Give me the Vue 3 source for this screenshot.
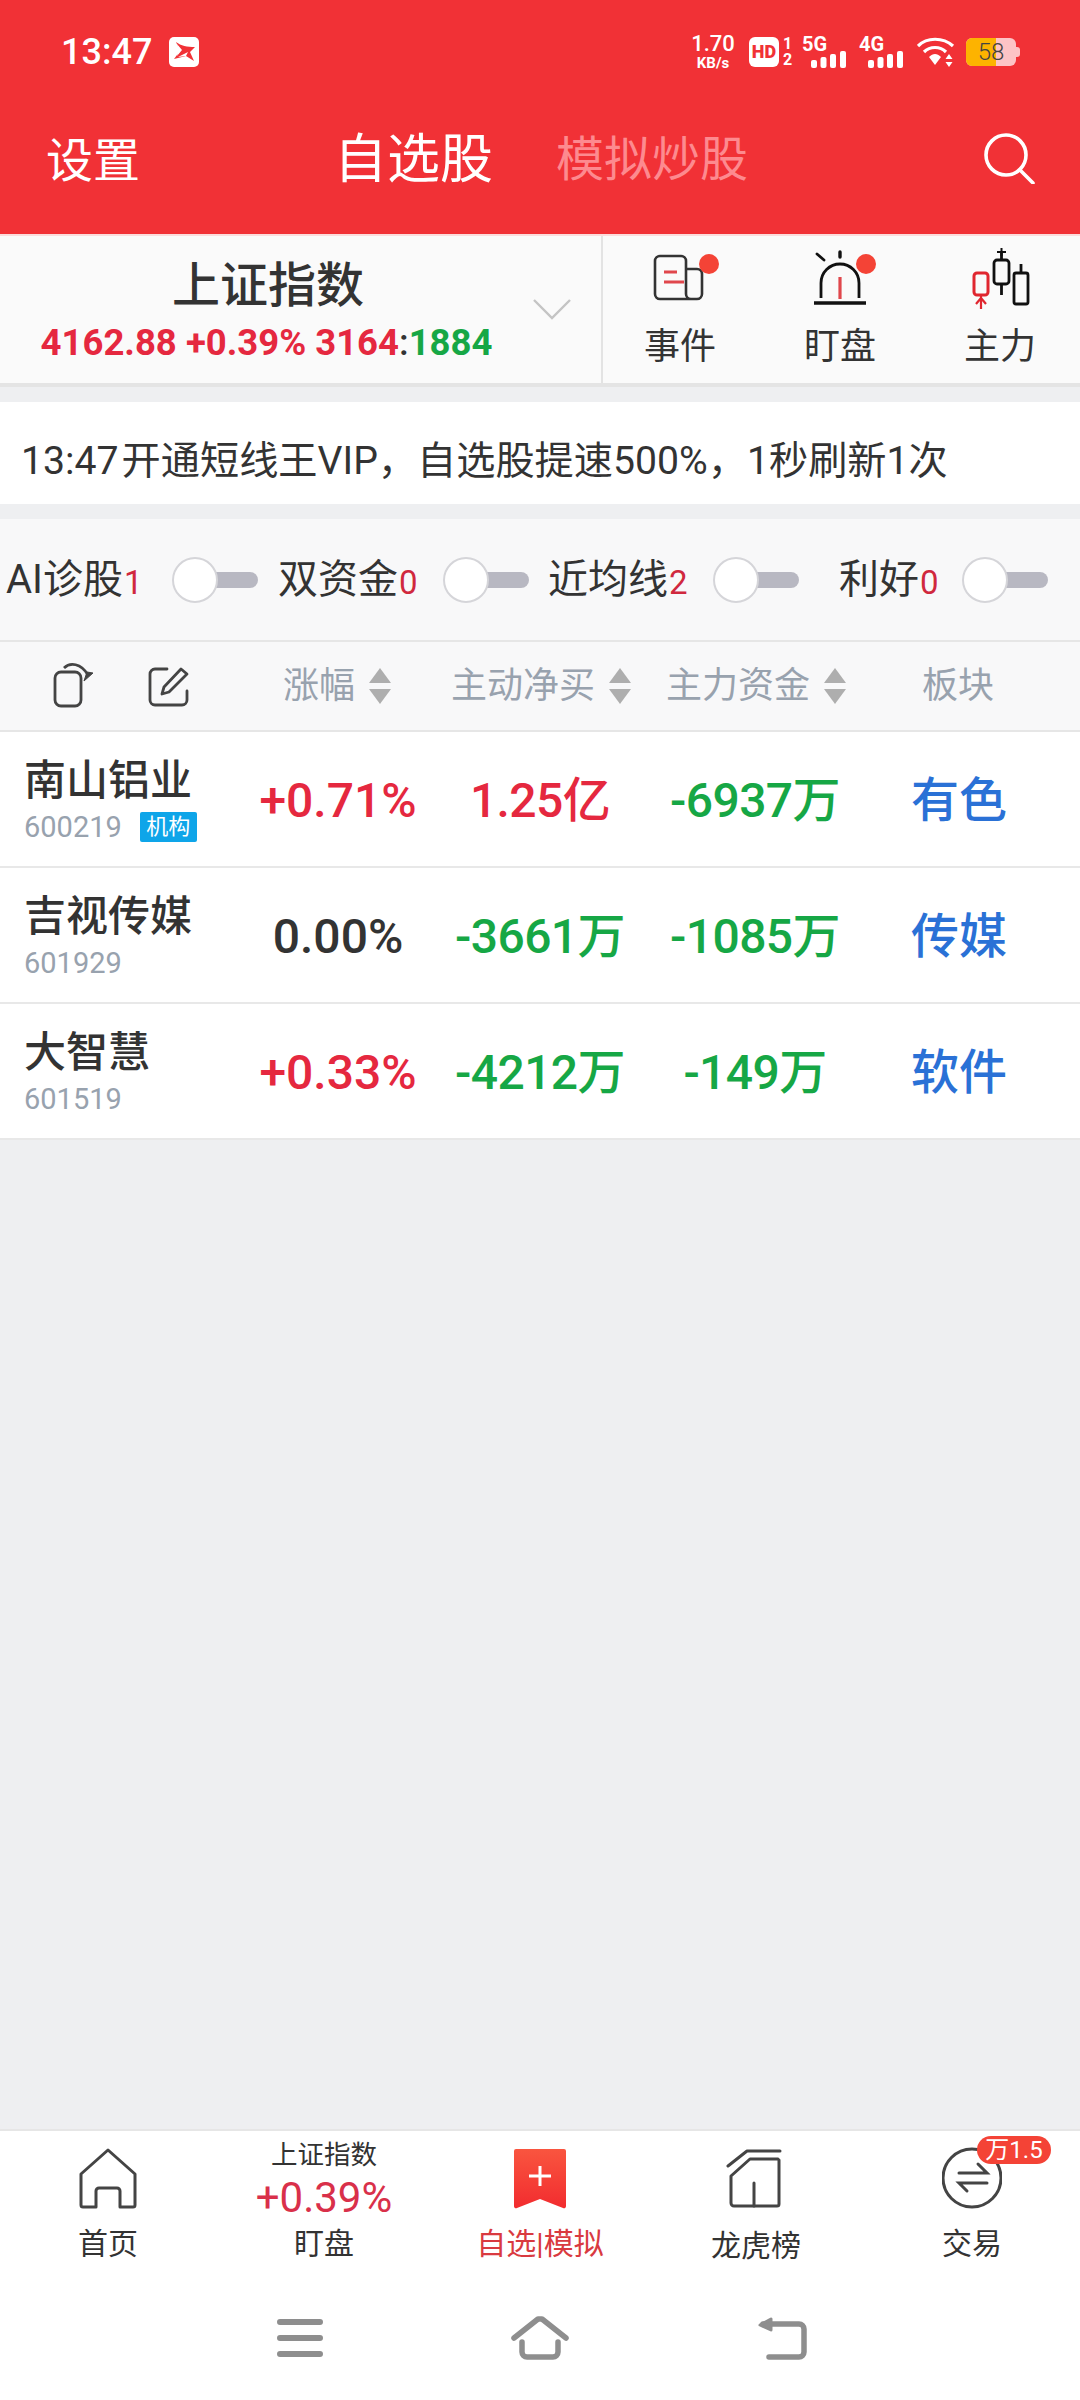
<script setup>
const filters = [
  { label: 'AI诊股', count: '1', cls: 'f1' },
  { label: '双资金', count: '0', cls: 'f2' },
  { label: '近均线', count: '2', cls: 'f3' },
  { label: '利好', count: '0', cls: 'f4' }
]
const stocks = [
  { name: '南山铝业', code: '600219', tag: '机构', pct: '+0.71%', pc: 'red', net: '1.25亿', nc: 'red', main: '-6937万', sector: '有色' },
  { name: '吉视传媒', code: '601929', pct: '0.00%', pc: 'dark', net: '-3661万', nc: 'green', main: '-1085万', sector: '传媒' },
  { name: '大智慧', code: '601519', pct: '+0.33%', pc: 'red', net: '-4212万', nc: 'green', main: '-149万', sector: '软件' }
]
</script>

<template>
  <div class="page">
    <header class="top">
      <div class="status">
        <span class="time">13:47</span>
        <svg class="appicon" width="30" height="30" viewBox="0 0 30 30"><rect width="30" height="30" rx="5" fill="#fff"/><path d="M7 5 C12 9 18 10 26 10 L21 15 L25 24 L17 19 L5 22 L11 14 Z" fill="#f13136"/><path d="M8 7 C9 12 9 15 8 19 L13 13 Z" fill="#fff"/><path d="M9 20 L19 15 L17 19 Z" fill="#fff"/></svg>
        <div class="spacer"></div>
        <div class="speed"><b>1.70</b><i>KB/s</i></div>
        <span class="hd">HD</span>
        <div class="sim"><b>1</b><b>2</b></div>
        <div class="net n5">
          <b>5G</b>
          <svg width="36" height="17" viewBox="0 0 36 17"><rect x="0" y="9" width="6" height="8" rx="2" fill="#fff"/><rect x="9.500" y="6" width="6" height="11" rx="2" fill="#fff"/><rect x="19" y="3" width="6" height="14" rx="2" fill="#fff"/><rect x="29" y="0" width="6" height="17" rx="2" fill="#fff"/></svg>
        </div>
        <div class="net n4">
          <b>4G</b>
          <svg width="36" height="17" viewBox="0 0 36 17"><rect x="0" y="9" width="6" height="8" rx="2" fill="#fff"/><rect x="9.500" y="6" width="6" height="11" rx="2" fill="#fff"/><rect x="19" y="3" width="6" height="14" rx="2" fill="#fff"/><rect x="29" y="0" width="6" height="17" rx="2" fill="#fff"/></svg>
        </div>
        <svg class="wifi" width="38" height="30" viewBox="0 0 38 30"><g fill="none" stroke="#fff" stroke-width="3.200"><path d="M1 9 C10 0 26 0 36 9"/><path d="M7 15 C13 9 23 9 29 15"/></g><path d="M12 20 C16 16 20 16 24 20 L18 28 Z" fill="#fff"/><path d="M32 17 l3.500 5 h-7 Z M32 30 l3.500 -5 h-7 Z" fill="#fff"/></svg>
        <div class="battery"><span class="fill"></span><span class="num">58</span><span class="cap"></span></div>
      </div>
      <nav class="nav">
        <span class="set">设置</span>
        <span class="tab-on">自选股</span>
        <span class="tab-off">模拟炒股</span>
        <svg class="search" width="52" height="52" viewBox="0 0 52 52"><circle cx="23" cy="23" r="20" fill="none" stroke="#fff" stroke-width="3.600"/><path d="M37 38 L50 51" stroke="#fff" stroke-width="3.600" stroke-linecap="round"/></svg>
      </nav>
    </header>

    <section class="index">
      <div class="idx-main">
        <div class="idx-name">上证指数</div>
        <div class="idx-val"><span class="red">4162.88 +0.39% 3164</span><span class="colon">:</span><span class="green">1884</span></div>
      </div>
      <svg class="chev" width="38" height="22" viewBox="0 0 38 22"><path d="M1 2 L19 20 L37 2" fill="none" stroke="#c4c4c4" stroke-width="2.400"/></svg>
      <div class="idx-tools">
        <div class="tool t1">
          <span class="ico">
            <svg width="70" height="62" viewBox="0 0 70 62"><g fill="none" stroke="#333" stroke-width="2.600" stroke-linejoin="round"><path d="M46 52 H15 a5 5 0 0 1 -5 -5 V14 a5 5 0 0 1 5 -5 H36 a5 5 0 0 1 5 5 V47 a5 5 0 0 0 5 5 h6 a5 5 0 0 0 5 -5 V27 a5 5 0 0 0 -5 -5 H41"/></g><path d="M19 25 H32 M19 35 H39" stroke="#e0474c" stroke-width="3"/></svg>
            <em class="dot d1"></em>
          </span>
          <span class="tool-l">事件</span>
        </div>
        <div class="tool t2">
          <span class="ico">
            <svg width="70" height="62" viewBox="0 0 70 62"><g fill="none" stroke="#111" stroke-width="2.800"><path d="M16 51 V36 a19 19 0 0 1 38 0 V51"/><path d="M9 56 H61" stroke-width="3.400"/><path d="M35 5 V10" stroke-linecap="round" stroke-width="3.400"/><path d="M12 7 L19 13" stroke-linecap="round"/></g><path d="M35 30 V52" stroke="#e0474c" stroke-width="3.200"/></svg>
            <em class="dot d2"></em>
          </span>
          <span class="tool-l">盯盘</span>
        </div>
        <div class="tool t3">
          <span class="ico">
            <svg width="70" height="64" viewBox="0 0 70 64"><g fill="none" stroke="#111" stroke-width="2.800" stroke-linejoin="round"><rect x="29" y="13" width="15" height="24" rx="3"/><path d="M36.500 37 V48 M36.500 4 V13"/><rect x="49" y="26" width="14" height="31" rx="2"/><path d="M56 17 V26"/></g><path d="M32 5 h9 M36.500 1 v8" stroke="#111" stroke-width="2"/><rect x="9" y="26" width="14" height="22" rx="3" fill="none" stroke="#e0262f" stroke-width="3"/><path d="M16 48 V62 M11 57 L16 51 L21 57" fill="none" stroke="#e0262f" stroke-width="2.200"/></svg>
          </span>
          <span class="tool-l">主力</span>
        </div>
      </div>
    </section>

    <div class="notice"><span class="n-time">13:47</span>开通短线王VIP，自选股提速500%，1秒刷新1次</div>

    <section class="filters">
      <div v-for="f in filters" :key="f.label" class="filter" :class="f.cls">
        <span class="f-label">{{ f.label }}</span><span class="f-count">{{ f.count }}</span>
        <span class="toggle"><span class="track"></span><span class="knob"></span></span>
      </div>
    </section>

    <section class="thead">
      <svg class="h-copy" width="42" height="46" viewBox="0 0 42 46"><g fill="none" stroke="#444" stroke-width="2.800" stroke-linejoin="round"><rect x="2" y="10" width="26" height="34" rx="6"/><path d="M11 6 C17 0 28 1 35 13"/></g><path d="M31 19 L40 11 L34 10 Z" fill="#444" stroke="#444" stroke-width="1"/></svg>
      <svg class="h-edit" width="42" height="42" viewBox="0 0 42 42"><g fill="none" stroke="#444" stroke-width="2.800" stroke-linejoin="round" stroke-linecap="round"><path d="M19 3 H7 a5 5 0 0 0 -5 5 V34 a5 5 0 0 0 5 5 H34 a5 5 0 0 0 5 -5 V25"/><path d="M16 21 L33 3 L39 8 L21 26 L14 28 Z"/></g></svg>
      <div class="h-cell h1"><span>涨幅</span><i class="sort"></i></div>
      <div class="h-cell h2"><span>主动净买</span><i class="sort"></i></div>
      <div class="h-cell h3"><span>主力资金</span><i class="sort"></i></div>
      <div class="h-cell h4"><span>板块</span></div>
    </section>

    <section class="rows">
      <div v-for="s in stocks" :key="s.code" class="row">
        <div class="stock">
          <div class="s-name">{{ s.name }}</div>
          <div class="s-sub"><span class="s-code">{{ s.code }}</span><span v-if="s.tag" class="s-tag">{{ s.tag }}</span></div>
        </div>
        <div class="v" :class="s.pc">{{ s.pct }}</div>
        <div class="v tight" :class="s.nc">{{ s.net }}</div>
        <div class="v tight green">{{ s.main }}</div>
        <div class="v blue">{{ s.sector }}</div>
      </div>
    </section>

    <div class="fill-area"></div>

    <footer class="bottom">
      <div class="tabs">
        <div class="tb">
          <svg class="tb-ico" width="60" height="62" viewBox="0 0 60 62"><path d="M30 3 L57 27 V58 a2 2 0 0 1 -2 2 H42 V44 a3 3 0 0 0 -3 -3 H21 a3 3 0 0 0 -3 3 V60 H5 a2 2 0 0 1 -2 -2 V27 Z" fill="none" stroke="#444" stroke-width="3" stroke-linejoin="round"/></svg>
          <span class="tb-l">首页</span>
        </div>
        <div class="tb mid">
          <span class="m-a">上证指数</span>
          <span class="m-b">+0.39%</span>
          <span class="tb-l m-c">盯盘</span>
        </div>
        <div class="tb">
          <svg class="tb-ico" width="60" height="62" viewBox="0 0 60 62"><defs><linearGradient id="bm" x1="0" y1="0" x2="0" y2="1"><stop offset="0" stop-color="#f9553f"/><stop offset="1" stop-color="#f22c2f"/></linearGradient></defs><path d="M4 4 a2 2 0 0 1 2 -2 H54 a2 2 0 0 1 2 2 V59 a2 2 0 0 1 -3 2 L30 52 L7 61 a2 2 0 0 1 -3 -2 Z" fill="url(#bm)"/><path d="M30 19 V39 M19 29 H41" stroke="#fff" stroke-width="3"/></svg>
          <span class="tb-l on">自选|模拟</span>
        </div>
        <div class="tb">
          <svg class="tb-ico" width="60" height="62" viewBox="0 0 60 62"><g fill="none" stroke="#444" stroke-width="3" stroke-linecap="round" stroke-linejoin="round"><path d="M2 19 L21 4 H54"/><path d="M52 12 H24 L5 29 V56 a3 3 0 0 0 3 3 H51 a2 2 0 0 0 2 -2 V13"/><path d="M28 36 V59"/></g></svg>
          <span class="tb-l l2">龙虎榜</span>
        </div>
        <div class="tb">
          <svg class="tb-ico" width="60" height="62" viewBox="0 0 60 62"><circle cx="30" cy="31" r="29" fill="none" stroke="#444" stroke-width="3"/><g fill="none" stroke="#444" stroke-width="3" stroke-linecap="round"><path d="M17 26 H45 L36 17"/><path d="M45 36 H17 L25 44"/></g></svg>
          <span class="tb-l">交易</span>
          <span class="badge">万1.5</span>
        </div>
      </div>
      <div class="sysnav">
        <svg width="46" height="38" viewBox="0 0 46 38"><path d="M3 3 H43 M3 19 H43 M3 35 H43" stroke="#8e8e8e" stroke-width="6" stroke-linecap="round"/></svg>
        <svg width="58" height="44" viewBox="0 0 58 44"><g fill="none" stroke="#8e8e8e" stroke-width="5.500" stroke-linecap="round" stroke-linejoin="round"><path d="M3 22 L27 3 H31 L55 22"/><path d="M11 26 V36 a5 5 0 0 0 5 5 H42 a5 5 0 0 0 5 -5 V26"/></g></svg>
        <svg width="50" height="44" viewBox="0 0 50 44"><g fill="none" stroke="#8e8e8e" stroke-width="5.500" stroke-linecap="round" stroke-linejoin="round"><path d="M12 41 H42 a5 5 0 0 0 5 -5 V13 a5 5 0 0 0 -5 -5 H6"/><path d="M3 9 L14 3 V14 Z" fill="#8e8e8e" stroke-width="3"/></g></svg>
      </div>
    </footer>
  </div>
</template>

<style>
html, body { margin: 0; padding: 0; }
</style>

<style scoped>
.page {
  width: 1080px;
  height: 2400px;
  display: flex;
  flex-direction: column;
  background: #eeeff1;
  font-family: Roboto, "Noto Sans CJK SC", sans-serif;
  color: #333;
  overflow: hidden;
}
.red { color: #e5283f; }
.green { color: #16a745; }
.dark { color: #333; }
.blue { color: #2a71d6; }

.top { background: #f13136; height: 234px; color: #fff; }
.status { height: 104px; display: flex; align-items: center; padding: 0 60px 0 61px; }
.time { font-size: 36px; font-weight: 500; width: 108px; line-height: 1; }
.appicon { display: block; }
.spacer { flex: 1; }
.speed { width: 42px; display: flex; flex-direction: column; align-items: center; line-height: 1; }
.speed b { font-size: 22px; font-weight: 500; }
.speed i { font-size: 15px; font-style: normal; font-weight: 700; margin-top: 1px; }
.hd { width: 30px; height: 30px; margin-left: 15px; background: #fff; border-radius: 6px; color: #f13136; font-size: 18px; font-weight: 900; text-align: center; line-height: 30px; }
.sim { width: 13px; margin-left: 2px; display: flex; flex-direction: column; line-height: 1; align-items: center; }
.sim b { font-size: 16px; font-weight: 700; }
.net { position: relative; width: 45px; height: 32px; margin-left: 8px; }
.n4 { margin-left: 12px; }
.net b { position: absolute; left: 0; top: 0; font-size: 20px; font-weight: 700; line-height: 16px; }
.net svg { position: absolute; left: 9px; top: 15px; }
.wifi { margin-left: 13px; }
.battery { position: relative; width: 50px; height: 28px; margin-left: 11px; margin-right: 4px; background: #fdc4c6; border-radius: 6px; overflow: visible; }
.battery .fill { position: absolute; left: 0; top: 0; bottom: 0; width: 30px; background: #fdb300; border-radius: 6px 0 0 6px; }
.battery .num { position: absolute; inset: 0; text-align: center; font-size: 24px; line-height: 28px; color: #444; font-weight: 300; }
.battery .cap { position: absolute; right: -4px; top: 9px; width: 4px; height: 10px; background: #fdc4c6; border-radius: 0 3px 3px 0; }

.nav { height: 130px; display: flex; align-items: center; padding: 0 45px 18px 46px; box-sizing: border-box; }
.set { font-size: 47px; width: 291px; line-height: 1; }
.tab-on { font-size: 53px; width: 218px; line-height: 1; margin-left: -3px; margin-right: 4px; }
.tab-off { font-size: 48px; color: #fd8a8f; line-height: 1; }
.search { margin-left: auto; margin-top: -4px; }

.index { display: flex; background: #fafafa; border-top: 2px solid #fbdcdc; border-bottom: 4px solid #e4e4e4; height: 147px; }
.idx-main { width: 533px; display: flex; flex-direction: column; align-items: center; }
.idx-name { font-size: 48px; font-weight: 500; line-height: 60px; margin-top: 20px; margin-left: 3px; }
.idx-val { font-size: 36.500px; font-weight: 700; line-height: 42px; margin-top: 6px; }
.colon { color: #333; font-weight: 500; }
.chev { margin-top: 62px; }
.idx-tools { flex: 1; display: flex; margin-left: 30px; border-left: 2px solid #e3e3e3; position: relative; }
.tool { position: absolute; top: 0; width: 120px; display: flex; flex-direction: column; align-items: center; }
.t1 { left: 17px; }
.t2 { left: 177px; }
.t3 { left: 337px; }
.ico { position: relative; width: 70px; height: 64px; margin-top: 11px; display: block; }
.ico svg { display: block; }
.dot { position: absolute; width: 20px; height: 20px; border-radius: 50%; background: #f44336; top: 7px; }
.d1 { left: 54px; }
.d2 { left: 51px; }
.tool-l { font-size: 36px; line-height: 44px; margin-top: 14px; }

.notice { margin-top: 15px; height: 102px; background: #fff; padding: 8px 0 0 21px; box-sizing: border-box; font-size: 39.200px; line-height: 102px; color: #333; white-space: pre; }
.n-time { margin-right: 3px; }
.filters { margin-top: 15px; height: 121px; background: #f8f8f9; border-bottom: 2px solid #e6e6e6; display: grid; grid-template-columns: 272px 270px 291px 1fr; padding-left: 6px; align-items: center; }
.filter { display: flex; align-items: center; line-height: 1; }
.f-label { font-size: 40px; }
.f-count { font-size: 33px; color: #d0283e; margin-top: 6px; margin-left: 1px; }
.toggle { position: relative; width: 86px; height: 46px; display: block; }
.f1 .toggle { margin-left: 29px; }
.f2 .toggle { margin-left: 25px; }
.f3 .toggle { margin-left: 25px; }
.f4 .toggle { margin-left: 23px; }
.track { position: absolute; right: 0; top: 15px; width: 60px; height: 16px; background: #b8b8c2; border-radius: 8px; }
.knob { position: absolute; left: 0; top: 0; width: 42px; height: 42px; border: 2px solid #d5d5d9; border-radius: 50%; background: #fff; }

.thead { position: relative; height: 88px; background: #f8f8f9; border-bottom: 2px solid #e6e6e6; }
.h-copy { position: absolute; left: 53px; top: 20px; }
.h-edit { position: absolute; left: 148px; top: 24px; }
.h-cell { position: absolute; top: 0; height: 88px; display: flex; align-items: center; font-size: 36px; color: #98a2ae; line-height: 1; }
.h1 { left: 283px; }
.h2 { left: 451px; }
.h3 { left: 666px; }
.h4 { left: 922px; }
.sort { position: relative; display: block; width: 22px; height: 36px; margin-left: 14px; }
.sort::before, .sort::after { content: ""; position: absolute; left: 0; border-left: 11px solid transparent; border-right: 11px solid transparent; }
.sort::before { top: 0; border-bottom: 15px solid #aeaeae; }
.sort::after { bottom: 0; border-top: 15px solid #aeaeae; }

.rows { background: #fff; }
.row { height: 134px; display: grid; grid-template-columns: 230px 216px 188px 242px 166px; border-bottom: 2px solid #e8e8e8; align-items: center; }
.stock { padding-left: 24px; }
.s-name { font-size: 42px; font-weight: 500; line-height: 52px; margin-top: 1px; }
.s-sub { display: flex; align-items: center; margin-top: 3px; height: 34px; }
.s-code { font-size: 29px; color: #98a2ae; line-height: 34px; }
.s-tag { margin-left: 18px; width: 57px; height: 30px; background: #0ea5e9; color: #fff; font-size: 22px; text-align: center; line-height: 30px; border-radius: 2px; }
.v { text-align: center; font-size: 48px; font-weight: 500; line-height: 1; white-space: nowrap; padding-top: 3px; }
.tight { letter-spacing: -0.600px; }

.fill-area { flex: 1; }

.bottom { height: 271px; background: #fff; border-top: 2px solid #e6e6e6; box-sizing: border-box; }
.tabs { height: 151px; display: flex; }
.tb { position: relative; width: 216px; display: flex; flex-direction: column; align-items: center; padding-top: 16px; box-sizing: border-box; }
.tb-ico { display: block; height: 62px; }
.tb-l { font-size: 30px; line-height: 40px; margin-top: 15px; color: #333; }
.tb-l.on { color: #d93a40; }
.tb-l.l2 { margin-top: 17px; }
.mid { padding-top: 9px; }
.m-a { font-size: 26.500px; line-height: 30px; color: #333; }
.m-b { font-size: 42px; line-height: 50px; color: #d9304a; margin-top: 3px; }
.m-c { margin-top: 1px; }
.badge { position: absolute; left: 113px; top: 5px; width: 74px; height: 28px; background: #f44336; color: #fff; font-size: 24px; line-height: 28px; text-align: center; border-radius: 14px; white-space: nowrap; font-weight: 400; }
.sysnav { height: 118px; display: flex; padding-left: 277px; align-items: center; }
.sysnav svg { display: block; margin-top: -6px; }
.sysnav svg:nth-child(1) { margin-right: 188px; }
.sysnav svg:nth-child(2) { margin-right: 188px; }
</style>
